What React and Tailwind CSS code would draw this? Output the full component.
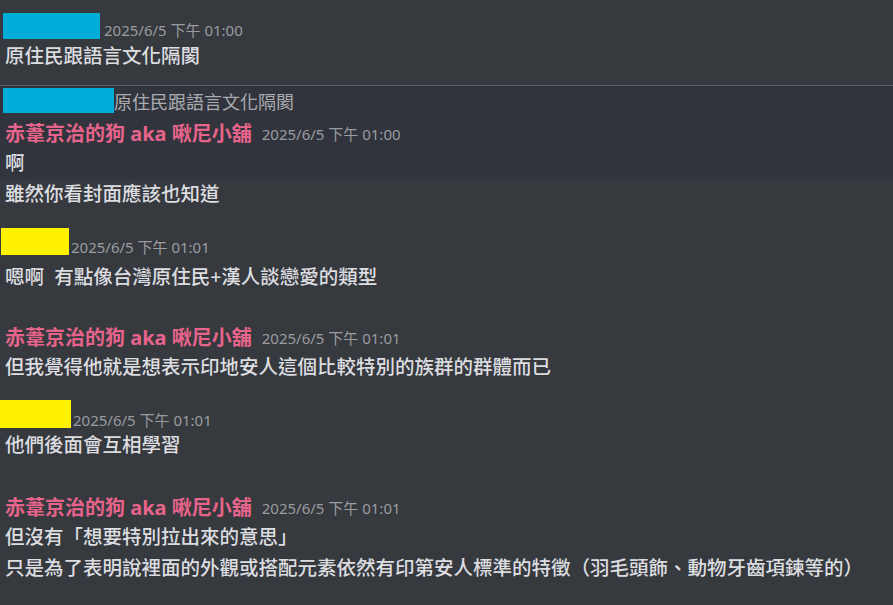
import React from 'react';

const FONT = { fontFamily: '"Noto Sans", "Noto Sans CJK TC", sans-serif' };

const Stamp = ({ children, className = '' }) => (
  <span className={`text-[15px] text-[#9a9ca1] whitespace-nowrap ${className}`}>{children}</span>
);

const Line = ({ children }) => (
  <div className="h-[29px] leading-[29px] text-[19.5px] font-medium text-[#dcdde0] whitespace-pre pl-[5px]">
    {children}
  </div>
);

const NameRow = ({ time }) => (
  <div className="h-[28px] flex items-center pl-[5px]">
    <span className="text-[20px] font-bold text-[#e6648b] leading-[28px]">赤葦京治的狗 aka 啾尼小舖</span>
    <Stamp className="ml-[10px] leading-[28px]">{time}</Stamp>
  </div>
);

const Redacted = ({ color, w, h, time, className = '' }) => (
  <div className={`flex items-end ${className}`}>
    <div className={`${color} ${w} ${h}`} />
    <Stamp className="ml-[2px] leading-[16px]">{time}</Stamp>
  </div>
);

export default function App() {
  return (
    <div className="w-[893px] h-[605px] bg-[#36393d] overflow-hidden" style={FONT}>
      {/* first message */}
      <div className="pt-[13px] pb-[15px]">
        <div className="flex items-end pl-[3px]">
          <div className="bg-[#00acd8] w-[97px] h-[26px]" />
          <Stamp className="ml-[4px] leading-[18px]">2025/6/5 下午 01:00</Stamp>
        </div>
        <div className="mt-[2px]">
          <Line>原住民跟語言文化隔閡</Line>
        </div>
      </div>

      <div className="h-px bg-[#5c5f63]" />

      {/* highlighted reply */}
      <div className="bg-[#31343c] pt-[2px] pb-[2px]">
        <div className="flex items-end pl-[3px]">
          <div className="bg-[#00acd8] w-[111px] h-[25px]" />
          <span className="text-[18px] leading-[22px] text-[#a9abb0]">原住民跟語言文化隔閡</span>
        </div>
        <div className="mt-[7px]">
          <NameRow time="2025/6/5 下午 01:00" />
        </div>
        <Line>啊</Line>
      </div>
      <Line>雖然你看封面應該也知道</Line>

      <Redacted className="mt-[20px] pl-[1px]" color="bg-[#fff200]" w="w-[68px]" h="h-[27px]" time="2025/6/5 下午 01:01" />
      <div className="mt-[7px]">
        <Line>嗯啊  有點像台灣原住民+漢人談戀愛的類型</Line>
      </div>

      <div className="mt-[33px]">
        <NameRow time="2025/6/5 下午 01:01" />
        <Line>但我覺得他就是想表示印地安人這個比較特別的族群的群體而已</Line>
      </div>

      <Redacted className="mt-[19px]" color="bg-[#fff200]" w="w-[71px]" h="h-[28px]" time="2025/6/5 下午 01:01" />
      <div className="mt-[2px]">
        <Line>他們後面會互相學習</Line>
      </div>

      <div className="mt-[35px]">
        <NameRow time="2025/6/5 下午 01:01" />
        <Line>但沒有「想要特別拉出來的意思」</Line>
        <div className="mt-[2px]">
          <Line>只是為了表明說裡面的外觀或搭配元素依然有印第安人標準的特徵（羽毛頭飾、動物牙齒項鍊等的）</Line>
        </div>
      </div>
    </div>
  );
}
